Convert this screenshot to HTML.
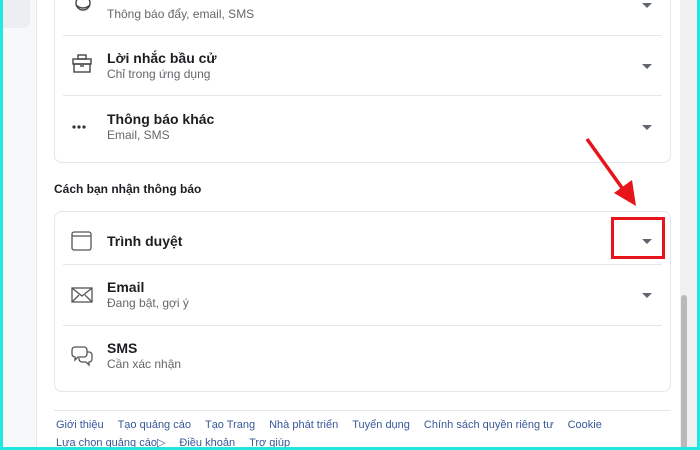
<!DOCTYPE html>
<html><head><meta charset="utf-8"><style>
*{box-sizing:border-box;margin:0;padding:0}
body{width:700px;height:450px;overflow:hidden;background:#20e8e0;font-family:"Liberation Sans",Arial,sans-serif;position:relative}
.frame{position:absolute;left:3px;top:0;width:694px;height:447px;background:#fff;overflow:hidden}
.lp{position:absolute;left:0;top:0;width:34px;height:447px;background:#f7f8fa;border-right:1px solid #e6e7ea}
.lp .b{position:absolute;left:0;top:0;width:27px;height:28px;background:#eceef1;border-radius:0 0 6px 0}
.sb{position:absolute;left:677px;top:0;width:17px;height:447px;background:#f0f0f0}
.sb .t{position:absolute;left:1px;top:295px;width:6px;height:160px;background:#b9b9b9;border-radius:3px}
.card{position:absolute;left:51px;width:617px;border:1px solid #e4e6eb;border-radius:8px;background:#fff}
.div{position:absolute;left:8px;right:8px;height:1px;background:#e4e6eb}
.ti{position:absolute;left:52px;font-size:14px;font-weight:bold;color:#1c1e21}
.su{position:absolute;left:52px;font-size:12px;color:#65676b}
.chev{position:absolute;width:0;height:0;border-left:5px solid transparent;border-right:5px solid transparent;border-top:5px solid #606770}
.ic{position:absolute;left:16px}
.h{position:absolute;left:51px;top:182px;font-size:12px;font-weight:bold;color:#1c1e21}
.ft{position:absolute;left:53px;font-size:11px;color:#385898;white-space:nowrap}
.ft span{margin-right:14px}
</style></head><body>
<div class="frame">
<div class="lp"><div class="b"></div></div>
<div class="sb"><div class="t"></div></div>

<div class="card" style="top:-20px;height:183px">
 <svg class="ic" style="left:17px;top:14px" width="22" height="22" viewBox="0 0 22 22" fill="none" stroke="#444" stroke-width="1.4"><circle cx="11" cy="8" r="7"/><path d="M4 10 Q11 16 18 10"/></svg>
 <div class="su" style="top:26px">Thông báo đẩy, email, SMS</div>
 <div class="chev" style="left:587px;top:22px"></div>
 <div class="div" style="top:54px"></div>
 <div class="div" style="top:114px"></div>
 <svg class="ic" style="top:71px" width="22" height="22" viewBox="0 0 22 22" fill="none" stroke="#444" stroke-width="1.4"><rect x="2" y="7" width="18" height="5"/><rect x="3" y="12" width="16" height="8"/><rect x="7" y="3" width="8" height="4"/><path d="M9 14h4"/></svg>
 <div class="ti" style="top:69px">Lời nhắc bầu cử</div>
 <div class="su" style="top:86px">Chỉ trong ứng dụng</div>
 <div class="chev" style="left:587px;top:83px"></div>
 <svg class="ic" style="top:143px" width="16" height="6" viewBox="0 0 16 6" fill="#333"><circle cx="3" cy="3" r="1.6"/><circle cx="8" cy="3" r="1.6"/><circle cx="13" cy="3" r="1.6"/></svg>
 <div class="ti" style="top:130px">Thông báo khác</div>
 <div class="su" style="top:147px">Email, SMS</div>
 <div class="chev" style="left:587px;top:144px"></div>
</div>

<div class="h">Cách bạn nhận thông báo</div>

<div class="card" style="top:211px;height:181px">
 <svg class="ic" style="top:19px" width="21" height="20" viewBox="0 0 21 20" fill="none" stroke="#555" stroke-width="1.3"><rect x="1" y="1" width="19" height="18" rx="2"/><path d="M1 5h19"/></svg>
 <div class="ti" style="top:21px">Trình duyệt</div>
 <div class="chev" style="left:587px;top:27px"></div>
 <div class="div" style="top:52px"></div>
 <svg class="ic" style="top:75px" width="22" height="16" viewBox="0 0 22 16" fill="none" stroke="#555" stroke-width="1.3"><rect x="1" y="1" width="20" height="14"/><path d="M1 1l10 8 10-8M1 15l7-7M21 15l-7-7"/></svg>
 <div class="ti" style="top:67px">Email</div>
 <div class="su" style="top:84px">Đang bật, gợi ý</div>
 <div class="chev" style="left:587px;top:81px"></div>
 <div class="div" style="top:113px"></div>
 <svg class="ic" style="top:133px" width="22" height="22" viewBox="0 0 22 22" fill="none" stroke="#555" stroke-width="1.3"><path d="M4 2h9a3 3 0 0 1 3 3v4a3 3 0 0 1-3 3H7l-3 3v-3a3 3 0 0 1-3-3V5a3 3 0 0 1 3-3z"/><path d="M16 7h2a3 3 0 0 1 3 3v4a3 3 0 0 1-3 3v3l-3-3h-4a3 3 0 0 1-3-3v-1"/></svg>
 <div class="ti" style="top:128px">SMS</div>
 <div class="su" style="top:145px">Cần xác nhận</div>
</div>

<div style="position:absolute;left:51px;top:410px;width:617px;height:1px;background:#e4e6eb"></div>
<div class="ft" style="top:419px"><span>Giới thiệu</span><span>Tạo quảng cáo</span><span>Tạo Trang</span><span>Nhà phát triển</span><span>Tuyển dụng</span><span>Chính sách quyền riêng tư</span><span>Cookie</span></div>
<div class="ft" style="top:436px"><span>Lựa chọn quảng cáo▷</span><span>Điều khoản</span><span>Trợ giúp</span></div>

<div style="position:absolute;left:608px;top:217px;width:54px;height:42px;border:3px solid #e8141c"></div>
<svg style="position:absolute;left:0;top:0" width="700" height="450"><line x1="584" y1="139" x2="622" y2="192" stroke="#e8141c" stroke-width="3.5"/><polygon points="633,206 611,193 629,180" fill="#e8141c"/></svg>
</div>
</body></html>
